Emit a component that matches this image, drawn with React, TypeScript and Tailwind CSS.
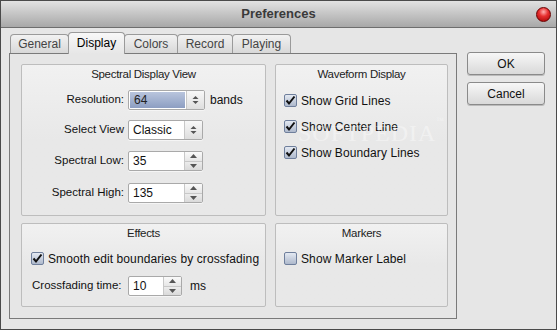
import React from "react";

const F = { fontFamily: '"Liberation Sans", Arial, sans-serif' };

function Check({ checked }: { checked: boolean }) {
  return (
    <div className="relative w-[13px] h-[13px] rounded-[2px] border border-[#6f7f9c] bg-gradient-to-b from-[#e4e9f2] to-[#aeb9cc] shrink-0">
      {checked && (
        <svg viewBox="0 0 13 13" className="absolute left-[-1px] top-[-1px] w-[13px] h-[13px]">
          <path d="M2.5 6.5 L5 9.5 L10.5 2.5" fill="none" stroke="#111" strokeWidth="2" />
        </svg>
      )}
    </div>
  );
}

function CheckRow({ checked, label, className = "" }: { checked: boolean; label: string; className?: string }) {
  return (
    <div className={"flex items-center gap-[4px] whitespace-nowrap " + className}>
      <Check checked={checked} />
      <span className="text-[12px] tracking-[0.1px] text-[#111] leading-none">{label}</span>
    </div>
  );
}

function ComboArrows() {
  return (
    <div className="w-[18px] h-full border-l border-[#c8c8c8] bg-gradient-to-b from-[#f8f8f8] to-[#dedede] flex items-center justify-center">
      <svg viewBox="0 0 7 10" className="w-[7px] h-[10px]">
        <path d="M0.5 4 L3.5 1 L6.5 4 Z" fill="#555" />
        <path d="M0.5 6 L3.5 9 L6.5 6 Z" fill="#555" />
      </svg>
    </div>
  );
}

function SpinArrows() {
  return (
    <div className="w-[18px] h-full border-l border-[#c8c8c8] flex flex-col">
      <div className="flex-1 bg-gradient-to-b from-[#fafafa] to-[#e6e6e6] flex items-center justify-center border-b border-[#c8c8c8]">
        <svg viewBox="0 0 7 4" className="w-[7px] h-[4px]"><path d="M0 4 L3.5 0 L7 4 Z" fill="#555" /></svg>
      </div>
      <div className="flex-1 bg-gradient-to-b from-[#ececec] to-[#dadada] flex items-center justify-center">
        <svg viewBox="0 0 7 4" className="w-[7px] h-[4px]"><path d="M0 0 L3.5 4 L7 0 Z" fill="#555" /></svg>
      </div>
    </div>
  );
}

function Field({ value, w, combo, selected }: { value: string; w: string; combo?: boolean; selected?: boolean }) {
  return (
    <div className={"h-[20px] flex border border-[#a9a9a9] rounded-[2px] bg-white overflow-hidden shadow-[0_1px_0_#f5f5f5] " + w}>
      <div
        className={
          "flex-1 flex items-center pl-[4px] text-[12px] " +
          (selected ? "bg-gradient-to-b from-[#b9c5dd] to-[#8d9ec2] text-[#222] m-[1px]" : "text-[#111]")
        }
      >
        {value}
      </div>
      {combo ? <ComboArrows /> : <SpinArrows />}
    </div>
  );
}

function Group({ title, className = "", children }: { title: string; className?: string; children?: React.ReactNode }) {
  return (
    <div className={"border border-[#bdbdbd] rounded-[2px] bg-gradient-to-b from-[#f1f1f1] via-[#e8e8e8] to-[#e8e8e8] flex flex-col " + className}>
      <div className="text-center text-[11.5px] tracking-[-0.3px] text-[#222] pt-[2px] leading-[14px]">{title}</div>
      {children}
    </div>
  );
}

function Tab({ label, active, w }: { label: string; active?: boolean; w: string }) {
  return (
    <div
      className={
        "relative rounded-t-[4px] border border-b-0 border-[#9a9a9a] flex items-center justify-center text-[12px] -ml-[1px] " +
        w +
        (active
          ? " h-[22px] bg-gradient-to-b from-[#f8f8f8] to-[#e6e6e6] text-[#000] z-10 mb-[-1px] pb-[2px]"
          : " h-[19px] bg-gradient-to-b from-[#f2f2f2] to-[#d8d8d8] text-[#444]")
      }
    >
      {label}
    </div>
  );
}

function Button({ label }: { label: string }) {
  return (
    <div className="w-[78px] h-[23px] rounded-[3px] border border-[#8a8a8a] bg-gradient-to-b from-[#f7f7f7] to-[#d9d9d9] flex items-center justify-center text-[12px] text-[#111] shadow-[0_1px_0_#bbb]">
      {label}
    </div>
  );
}

const LBL = "w-[106px] text-right text-[11.5px] text-[#111] pr-[4px] whitespace-nowrap";

export default function App() {
  return (
    <div style={F} className="w-[557px] h-[330px] bg-[#e6e6e6] border border-[#4a4a4a] flex flex-col overflow-hidden relative select-none">
      {/* Title bar */}
      <div className="h-[27px] shrink-0 bg-gradient-to-b from-[#e2e2e2] to-[#a8a8a8] border-b border-[#6e6e6e] flex items-center justify-center relative">
        <span className="text-[13px] font-bold text-[#3a3a3a]">Preferences</span>
        <div className="absolute right-[5px] top-[6px] w-[15px] h-[15px] rounded-full border border-[#6a0000] bg-[radial-gradient(circle_at_50%_30%,#ffb0b0_0%,#e83030_40%,#a00000_100%)]" />
      </div>

      <div className="flex flex-1">
        {/* Left: tabs + panel */}
        <div className="pl-[8px] pt-[4px] flex flex-col">
          <div className="flex items-end pl-[2px] h-[21px]">
            <Tab label="General" w="w-[59px]" />
            <Tab label="Display" w="w-[57px]" active />
            <Tab label="Colors" w="w-[54px]" />
            <Tab label="Record" w="w-[56px]" />
            <Tab label="Playing" w="w-[59px]" />
          </div>
          <div className="w-[448px] h-[266px] border border-[#7a7a7a] bg-[#e6e6e6] pl-[11px] pt-[10px] flex flex-col gap-[7px]">
            <div className="flex gap-[9px]">
              <Group title="Spectral Display View" className="w-[245px] h-[152px]">
                <div className="flex flex-col mt-[9px]">
                  <div className="flex items-center">
                    <span className={LBL}>Resolution:</span>
                    <Field value="64" w="w-[77px]" combo selected />
                    <span className="text-[12px] text-[#111] ml-[5px]">bands</span>
                  </div>
                  <div className="flex items-center mt-[10px]">
                    <span className={LBL}>Select View</span>
                    <Field value="Classic" w="w-[75px]" combo />
                  </div>
                  <div className="flex items-center mt-[11px]">
                    <span className={LBL}>Spectral Low:</span>
                    <Field value="35" w="w-[75px]" />
                  </div>
                  <div className="flex items-center mt-[12px]">
                    <span className={LBL}>Spectral High:</span>
                    <Field value="135" w="w-[75px]" />
                  </div>
                </div>
              </Group>
              <Group title="Waveform Display" className="w-[173px] h-[152px]">
                <div className="flex flex-col pl-[8px] mt-[13px] gap-[13px]">
                  <CheckRow checked label="Show Grid Lines" />
                  <CheckRow checked label="Show Center Line" />
                  <CheckRow checked label="Show Boundary Lines" />
                </div>
              </Group>
            </div>
            <div className="flex gap-[9px]">
              <Group title="Effects" className="w-[245px] h-[84px]">
                <CheckRow checked label="Smooth edit boundaries by crossfading" className="pl-[9px] mt-[12px]" />
                <div className="flex items-center pl-[10px] mt-[11px]">
                  <span className="w-[96px] text-[11.5px] text-[#111] whitespace-nowrap">Crossfading time:</span>
                  <Field value="10" w="w-[54px]" />
                  <span className="text-[12px] text-[#111] ml-[8px]">ms</span>
                </div>
              </Group>
              <Group title="Markers" className="w-[173px] h-[84px]">
                <CheckRow checked={false} label="Show Marker Label" className="pl-[8px] mt-[12px]" />
              </Group>
            </div>
          </div>
        </div>

        {/* Right buttons */}
        <div className="flex flex-col gap-[7px] pl-[10px] pt-[24px]">
          <Button label="OK" />
          <Button label="Cancel" />
        </div>
      </div>

      {/* watermark */}
      <div
        className="absolute left-[297px] top-[114px] text-[24px] tracking-[1px] text-white/40 pointer-events-none"
        style={{ fontFamily: '"Liberation Serif", serif' }}
      >
        SOFTPEDIA<span className="text-[8px] align-top">™</span>
      </div>
    </div>
  );
}
